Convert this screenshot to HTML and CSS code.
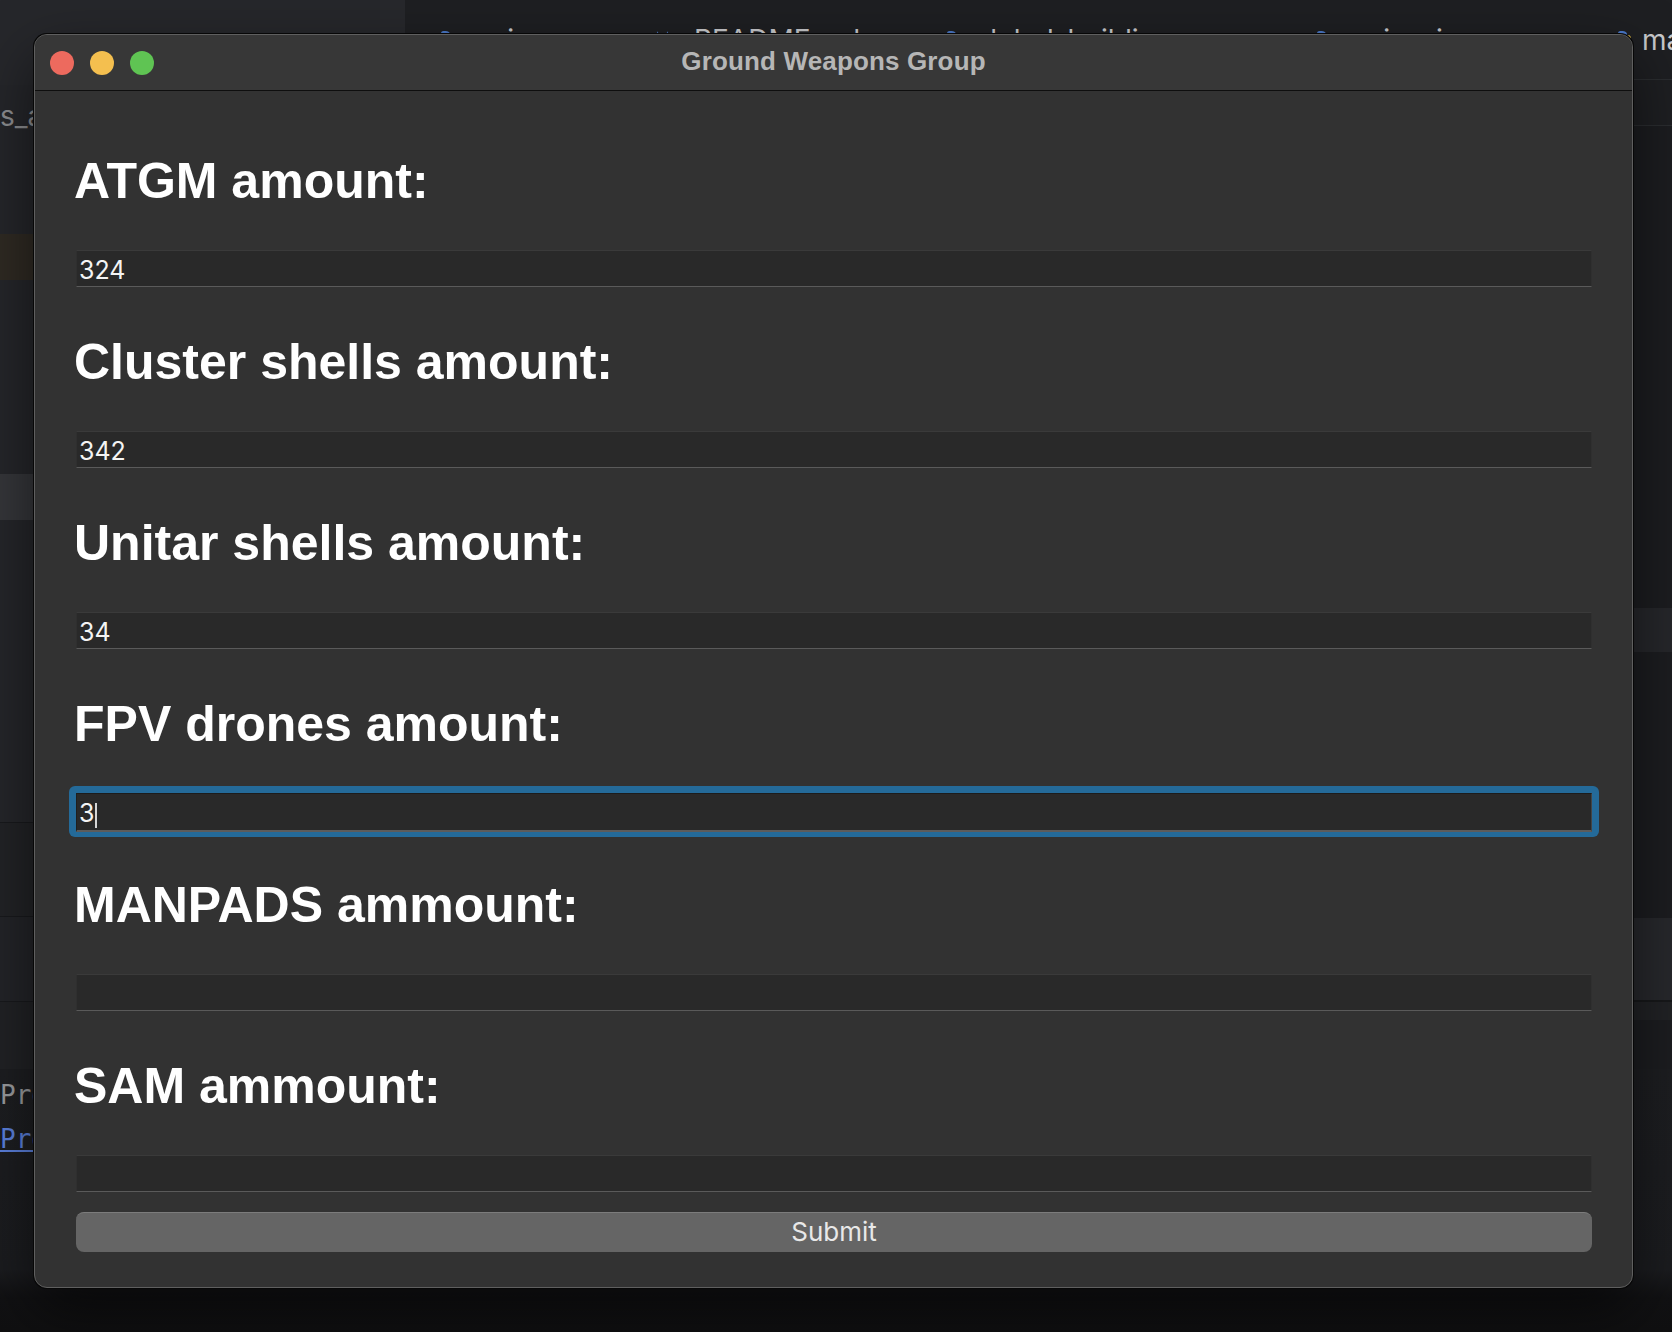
FILE: index.html
```html
<!DOCTYPE html>
<html lang="en">
<head>
<meta charset="utf-8">
<title>Ground Weapons Group</title>
<link rel="stylesheet" href="styles.css">
</head>
<body>
<div class="desktop">
  <div class="ide">
    <aside class="sidebar">
      <div class="sb-head"></div>
      <div class="sb-file">s_amount_ui.py</div>
      <div class="sb-gap g1"></div>
      <div class="sb-row amber"></div>
      <div class="sb-gap g2"></div>
      <div class="sb-row selected"></div>
      <div class="sb-gap g3"></div>
      <div class="sb-panel p1"></div>
      <div class="sb-panel p2"></div>
      <div class="sb-panel p3"></div>
    </aside>
    <main class="editor">
      <div class="tabs">
        <div class="tab t1">
          <svg class="py" viewBox="0 0 20 20"><path d="M9.5 1C6 1 6 2.5 6 4v2h4v1H4C2 7 1 8.5 1 11s1 4 3 4h2v-2.5C6 11 7 10 8.5 10h4c1.5 0 2.5-1 2.5-2.5V4c0-1.5-1.5-3-5.5-3z" fill="#4a78c8"/><path d="M10.5 19c3.5 0 3.5-1.5 3.5-3v-2h-4v-1h6c2 0 3-1.5 3-4s-1-4-3-4h-2v2.5c0 1.5-1 2.5-2.5 2.5h-4C6 10 5 11 5 12.5V16c0 1.5 1.5 3 5.5 3z" fill="#e8c04a"/></svg>
          <span>main.py</span><span class="close">×</span>
        </div>
        <div class="tab t2">
          <svg class="md" viewBox="0 0 24 16"><path d="M2 13V3l4 5 4-5v10M17 3v9m-3-3 3 3.5L20 9" fill="none" stroke="#4a78c8" stroke-width="2.2"/></svg>
          <span>README.md</span>
        </div>
        <div class="tab t3">
          <svg class="py" viewBox="0 0 20 20"><path d="M9.5 1C6 1 6 2.5 6 4v2h4v1H4C2 7 1 8.5 1 11s1 4 3 4h2v-2.5C6 11 7 10 8.5 10h4c1.5 0 2.5-1 2.5-2.5V4c0-1.5-1.5-3-5.5-3z" fill="#4a78c8"/><path d="M10.5 19c3.5 0 3.5-1.5 3.5-3v-2h-4v-1h6c2 0 3-1.5 3-4s-1-4-3-4h-2v2.5c0 1.5-1 2.5-2.5 2.5h-4C6 10 5 11 5 12.5V16c0 1.5 1.5 3 5.5 3z" fill="#e8c04a"/></svg>
          <span>global_building.py</span>
        </div>
        <div class="tab t4">
          <svg class="py" viewBox="0 0 20 20"><path d="M9.5 1C6 1 6 2.5 6 4v2h4v1H4C2 7 1 8.5 1 11s1 4 3 4h2v-2.5C6 11 7 10 8.5 10h4c1.5 0 2.5-1 2.5-2.5V4c0-1.5-1.5-3-5.5-3z" fill="#4a78c8"/><path d="M10.5 19c3.5 0 3.5-1.5 3.5-3v-2h-4v-1h6c2 0 3-1.5 3-4s-1-4-3-4h-2v2.5c0 1.5-1 2.5-2.5 2.5h-4C6 10 5 11 5 12.5V16c0 1.5 1.5 3 5.5 3z" fill="#e8c04a"/></svg>
          <span>main_ui.py</span>
        </div>
        <div class="tab t5">
          <svg class="py" viewBox="0 0 20 20"><path d="M9.5 1C6 1 6 2.5 6 4v2h4v1H4C2 7 1 8.5 1 11s1 4 3 4h2v-2.5C6 11 7 10 8.5 10h4c1.5 0 2.5-1 2.5-2.5V4c0-1.5-1.5-3-5.5-3z" fill="#4a78c8"/><path d="M10.5 19c3.5 0 3.5-1.5 3.5-3v-2h-4v-1h6c2 0 3-1.5 3-4s-1-4-3-4h-2v2.5c0 1.5-1 2.5-2.5 2.5h-4C6 10 5 11 5 12.5V16c0 1.5 1.5 3 5.5 3z" fill="#e8c04a"/></svg>
          <span>ma</span>
        </div>
      </div>
      <div class="crumbs"></div>
      <div class="code">
        <div class="code-gap c1"></div>
        <div class="code-line"></div>
        <div class="code-gap c2"></div>
        <div class="code-band"></div>
        <div class="code-strip"></div>
      </div>
    </main>
    <section class="terminal">
      <div class="term-line"><span class="term-text">Process finished</span></div>
      <div class="term-line"><span class="term-link">Problems</span><span class="term-err">ly</span></div>
    </section>
  </div>

  <div class="window">
    <div class="titlebar">
      <div class="lights">
        <span class="light red"></span>
        <span class="light yellow"></span>
        <span class="light green"></span>
      </div>
      <div class="title">Ground Weapons Group</div>
      <div></div>
    </div>
    <div class="content">
      <div class="group">
        <h2 class="label">ATGM amount:</h2>
        <div class="entry">324</div>
      </div>
      <div class="group">
        <h2 class="label">Cluster shells amount:</h2>
        <div class="entry">342</div>
      </div>
      <div class="group">
        <h2 class="label">Unitar shells amount:</h2>
        <div class="entry">34</div>
      </div>
      <div class="group">
        <h2 class="label">FPV drones amount:</h2>
        <div class="ring"><div class="entry focused">3<span class="caret"></span></div></div>
      </div>
      <div class="group">
        <h2 class="label">MANPADS ammount:</h2>
        <div class="entry"></div>
      </div>
      <div class="group">
        <h2 class="label">SAM ammount:</h2>
        <div class="entry"></div>
      </div>
      <div class="submit">Submit</div>
    </div>
  </div>
</div>
</body>
</html>
```

FILE: styles.css
```css
html, body {
  margin: 0;
  padding: 0;
}
body {
  width: 1672px;
  height: 1332px;
  overflow: hidden;
  background: #1e1f22;
  font-family: "Inter", "Liberation Sans", sans-serif;
}
.desktop {
  position: relative;
  width: 1672px;
  height: 1332px;
}
.ide {
  display: grid;
  grid-template-columns: 380px 1fr;
  grid-template-rows: 1069px 263px;
  height: 1332px;
}

/* sidebar */
.sidebar {
  background: #25262a;
  display: flex;
  flex-direction: column;
}
.sb-head { height: 85px; background: #26272b; }
.sb-file {
  height: 65px;
  line-height: 62px;
  color: #8c8d90;
  font-size: 28px;
  white-space: nowrap;
  overflow: hidden;
}
.g1 { height: 84px; }
.sb-row { height: 46px; }
.amber { background: #2f2a23; }
.g2 { height: 194px; }
.selected { background: #35363a; }
.g3 { height: 302px; }
.sb-panel {
  box-sizing: border-box;
  border-top: 1px solid #18191c;
  background: #222326;
}
.p1 { height: 94px; }
.p2 { height: 85px; background: #232428; }
.p3 { height: 68px; background: #212225; }

/* editor */
.editor {
  background: #1c1d20;
  display: flex;
  flex-direction: column;
}
.tabs {
  height: 80px;
  box-sizing: border-box;
  background: #1e1f22;
  border-left: 25px solid #27282c;
  border-bottom: 1px solid #2b2d30;
  display: flex;
  white-space: nowrap;
  overflow: hidden;
}
.tab {
  display: flex;
  align-items: center;
  gap: 12px;
  padding-left: 30px;
  box-sizing: border-box;
  color: #c8c9cc;
  font-size: 28px;
  flex: none;
  overflow: hidden;
}
.t1 { width: 221px; }
.t2 { width: 285px; }
.t3 { width: 370px; }
.t4 { width: 301px; }
.t5 { width: 120px; gap: 10px; }
.py { width: 20px; height: 20px; flex: none; }
.md { width: 26px; height: 18px; flex: none; }
.close { color: #8a8b8e; font-size: 24px; }
.crumbs {
  height: 46px;
  box-sizing: border-box;
  background: #1e1f22;
  border-bottom: 1px solid #2b2d30;
}
.code { display: flex; flex-direction: column; }
.c1 { height: 482px; }
.code-line { height: 44px; background: #26272b; }
.c2 { height: 266px; }
.code-band {
  height: 84px;
  box-sizing: border-box;
  background: #27282c;
  border-bottom: 2px solid #17181a;
}
.code-strip { height: 18px; background: #212225; }

/* terminal */
.terminal {
  grid-column: 1 / 3;
  padding-top: 4px;
  background: linear-gradient(to bottom, #1d1e21 0, #1b1c1f 200px, #111113 228px, #101011 263px);
  font-family: "DejaVu Sans Mono", "Liberation Mono", monospace;
  font-size: 26px;
}
.term-line {
  height: 44px;
  line-height: 44px;
  color: #9a9b9e;
  display: flex;
  white-space: nowrap;
}
.term-link {
  color: #5b80dd;
  text-decoration: underline;
}
.term-err {
  margin-left: auto;
  color: #c75652;
}

/* window */
.window {
  position: absolute;
  left: 34px;
  top: 34px;
  width: 1599px;
  height: 1254px;
  box-sizing: border-box;
  border: 1px solid #5f5f5f;
  border-radius: 13px;
  background: #323232;
  box-shadow: 0 0 0 1px #070707, 0 24px 60px rgba(0, 0, 0, 0.55);
  display: flex;
  flex-direction: column;
  overflow: hidden;
}
.titlebar {
  height: 56px;
  box-sizing: border-box;
  background: #373737;
  border-bottom: 1px solid #0e0e0e;
  display: grid;
  grid-template-columns: 1fr auto 1fr;
  align-items: center;
}
.lights {
  display: flex;
  gap: 16px;
  padding-left: 15px;
}
.light {
  width: 24px;
  height: 24px;
  border-radius: 50%;
}
.red { background: #ed6a5e; }
.yellow { background: #f4bf4f; }
.green { background: #5fc453; }
.title {
  font-family: "Liberation Sans", Arial, sans-serif;
  font-weight: 700;
  font-size: 26px;
  letter-spacing: 0.15px;
  line-height: 29px;
  color: #b6b6b6;
  padding-bottom: 3px;
}
.content {
  flex: 1;
  display: flex;
  flex-direction: column;
  padding: 62px 40px 0 41px;
}
.group + .group { margin-top: 47px; }
.label {
  margin: 0 0 41px -2px;
  font-family: "Liberation Sans", Arial, sans-serif;
  font-weight: 700;
  font-size: 50px;
  line-height: 56px;
  color: #ffffff;
}
.entry {
  height: 37px;
  box-sizing: border-box;
  background: #292929;
  border-top: 1px solid #3a3a3a;
  border-left: 1px solid #2f2f2f;
  border-right: 1px solid #2f2f2f;
  border-bottom: 1px solid #5a5a5a;
  padding: 2px 0 0 2px;
  font-family: "Inter", "Liberation Sans", sans-serif;
  font-size: 25px;
  line-height: 34px;
  color: #f4f4f4;
  white-space: nowrap;
}
.ring {
  margin: -7px;
  padding: 7px;
  border-radius: 6px;
  background: #246a99;
}
.entry.focused {
  height: 39px;
  margin-bottom: -2px;
  border-top: 1px solid #1c1c1c;
  border-left: 1px solid #1f1f1f;
  border-right: 1px solid #444;
  border-bottom: 2px solid #5c5c5c;
}
.caret {
  display: inline-block;
  width: 2px;
  height: 25px;
  margin-left: 1px;
  background: #d6d6d6;
  vertical-align: -6px;
}
.submit {
  margin-top: 20px;
  height: 40px;
  box-sizing: border-box;
  border-radius: 8px;
  background: #656565;
  border-top: 1px solid #7c7c7c;
  text-align: center;
  font-size: 26px;
  line-height: 38px;
  color: #e8e8e8;
}
```
